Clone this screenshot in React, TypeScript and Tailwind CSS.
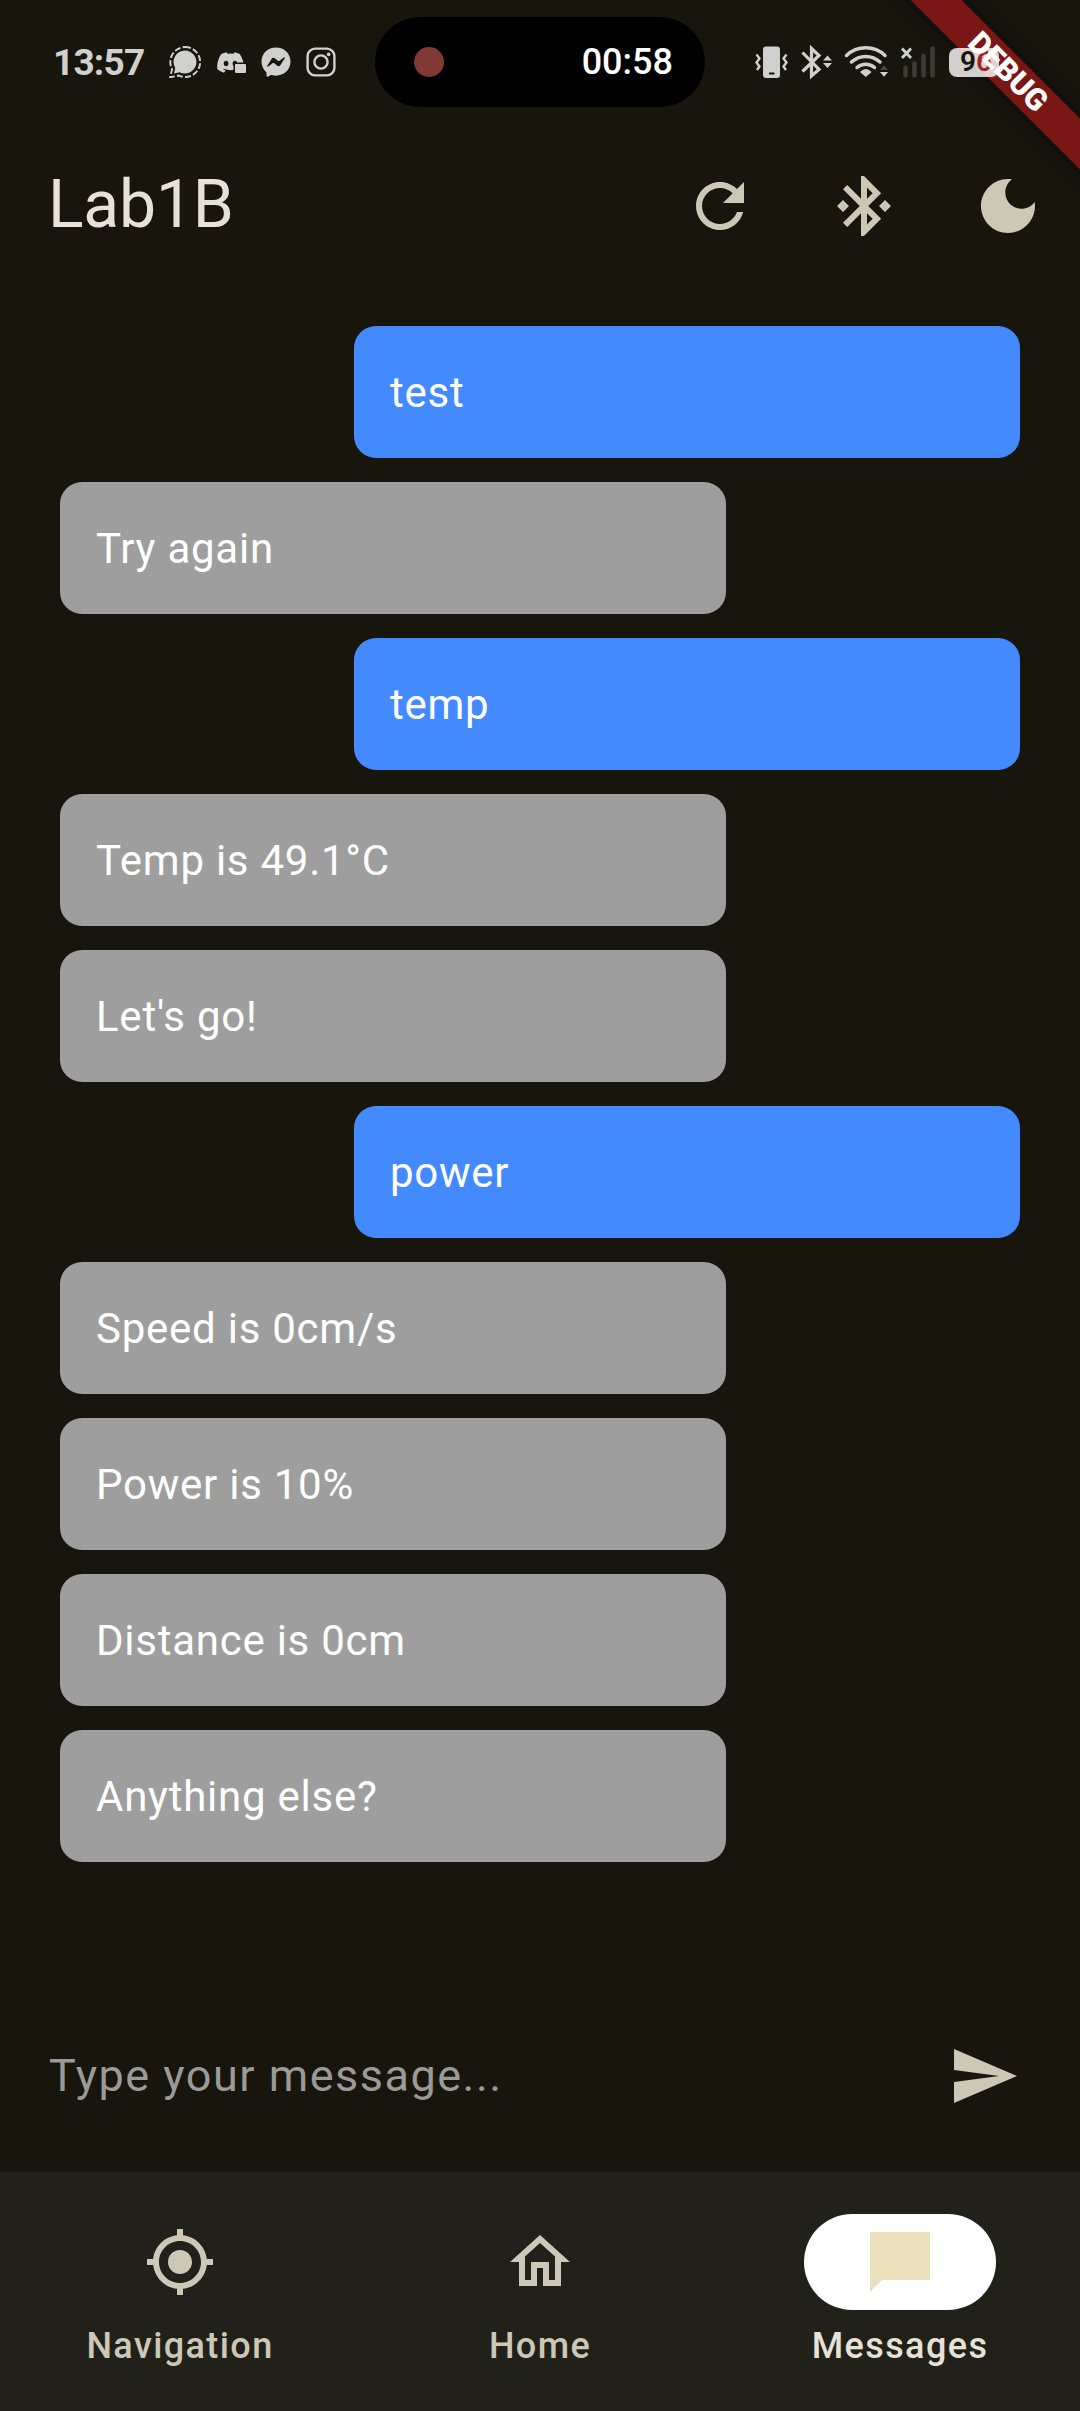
import React from "react";
import { FaDiscord, FaFacebookMessenger } from "react-icons/fa";

type Message = { text: string; mine?: boolean };

const messages: Message[] = [
  { text: "test", mine: true },
  { text: "Try again" },
  { text: "temp", mine: true },
  { text: "Temp is 49.1°C" },
  { text: "Let's go!" },
  { text: "power", mine: true },
  { text: "Speed is 0cm/s" },
  { text: "Power is 10%" },
  { text: "Distance is 0cm" },
  { text: "Anything else?" },
];

const icons = {
  refresh:
    "M17.65 6.35C16.2 4.9 14.21 4 12 4c-4.42 0-7.99 3.58-7.99 8s3.57 8 7.99 8c3.73 0 6.84-2.55 7.73-6h-2.08c-.82 2.33-3.04 4-5.65 4-3.31 0-6-2.69-6-6s2.69-6 6-6c1.66 0 3.14.69 4.22 1.78L13 11h7V4l-2.35 2.35z",
  bluetooth:
    "M7 12l-2-2-2 2 2 2 2-2zm10.71-4.29L12 2h-1v7.59L6.41 5 5 6.41 10.59 12 5 17.59 6.41 19 11 14.41V22h1l5.71-5.71-4.3-4.29 4.3-4.29zM13 5.83l1.88 1.88L13 9.59V5.83zm1.88 10.46L13 18.17v-3.76l1.88 1.88zM19 10l-2 2 2 2 2-2-2-2z",
  moon: "M12 3c-4.97 0-9 4.03-9 9s4.03 9 9 9 9-4.03 9-9c0-.46-.04-.92-.1-1.36-.98 1.37-2.58 2.26-4.4 2.26-2.98 0-5.4-2.42-5.4-5.4 0-1.81.89-3.42 2.26-4.4-.44-.06-.9-.1-1.36-.1z",
  send: "M2.01 21L23 12 2.01 3 2 10l15 2-15 2z",
  location:
    "M12 8c-2.21 0-4 1.79-4 4s1.79 4 4 4 4-1.79 4-4-1.79-4-4-4zm8.94 3c-.46-4.17-3.77-7.48-7.94-7.94V1h-2v2.06C6.83 3.52 3.52 6.83 3.06 11H1v2h2.06c.46 4.17 3.77 7.48 7.94 7.94V23h2v-2.06c4.17-.46 7.48-3.77 7.94-7.94H23v-2h-2.06zM12 19c-3.87 0-7-3.13-7-7s3.13-7 7-7 7 3.13 7 7-3.13 7-7 7z",
  home: "M12 5.69l5 4.5V18h-2v-6H9v6H7v-7.81l5-4.5M12 3L2 12h3v8h6v-6h2v6h6v-8h3L12 3z",
  chat: "M22 2H2v20l4-4h16V2z",
};

function Icon({ name, className = "" }: { name: keyof typeof icons; className?: string }) {
  return (
    <svg viewBox="0 0 24 24" className={`size-[72px] shrink-0 fill-current ${className}`}>
      <path d={icons[name]} />
    </svg>
  );
}

function SignalIcon() {
  return (
    <svg viewBox="0 0 32 32" className="size-8">
      <path d="M16 4.5a11.5 11.5 0 1 1-5.4 21.7L5 27.5l1.2-5.6A11.5 11.5 0 0 1 16 4.5z" fill="currentColor" />
      <path
        d="M16 1a15 15 0 1 1-6.2 28.6L1.2 31.3l1.9-8.2A15 15 0 0 1 16 1z"
        fill="none"
        stroke="currentColor"
        strokeWidth="1.9"
        strokeDasharray="6 2.2"
      />
    </svg>
  );
}

function DiscordIcon() {
  return (
    <div className="relative h-7 w-[30px]">
      <FaDiscord className="size-[29px]" />
      <span className="absolute right-0 bottom-[3px] h-[9px] w-[11px] rounded-[1px] bg-[#d0d0ce] ring-[1.5px] ring-[#18150d]" />
    </div>
  );
}

function InstagramIcon() {
  return (
    <svg viewBox="0 0 30 30" className="size-[30px]" fill="none" stroke="currentColor" strokeWidth="2.4">
      <rect x="1.6" y="1.6" width="26.8" height="26.8" rx="7.5" />
      <circle cx="15" cy="15" r="6.6" />
      <circle cx="22.6" cy="7.4" r="1.8" fill="currentColor" stroke="none" />
    </svg>
  );
}

function SystemIcons() {
  return (
    <svg viewBox="755 44 182 36" className="h-9 w-[182px]" fill="none" stroke="#d0d0ce">
      <rect x="763" y="46.5" width="17" height="31.5" rx="3" fill="#d0d0ce" stroke="none" />
      <path d="M769 73.5h5.5" stroke="#18150d" strokeWidth="2" />
      <path d="M756.5 54.500l3 4-3 4 3 4-2.500 3.500M786.500 54.500l-3 4 3 4-3 4 2.500 3.500" strokeWidth="2.400" />
      <path d="M802.500 52.500L819 69.500 811.500 76V48.500L819 55.500 802.500 71.500" strokeWidth="3.200" />
      <path d="M823 60.500l4.500-5 4.500 5zM823 63l4.500 5 4.500-5z" fill="#d0d0ce" stroke="none" />
      <path
        d="M846.500 55.500a28 28 0 0 1 38.500 0M851.500 62a21 21 0 0 1 28.500 0M857 67.500a13.500 13.500 0 0 1 17.500 0"
        strokeWidth="3.500"
        strokeLinecap="round"
      />
      <path d="M860 72q5.800-6 11.600 0l-5.800 5z" fill="#d0d0ce" stroke="none" />
      <path d="M880 70l4-4.500 4 4.500z" fill="#4a4842" stroke="none" />
      <path d="M880 72l4 4.800 4-4.800z" fill="#d0d0ce" stroke="none" />
      <path d="M902 48.500l9 9.500M911 48.500l-9 9.500" strokeWidth="2.800" />
      <path d="M905.500 67.500v8M914.500 63.500v12M923.500 56v19.500M932.500 48.500v27" stroke="#3d3b34" strokeWidth="4.500" strokeLinecap="round" />
    </svg>
  );
}

function StatusBar() {
  return (
    <div className="relative flex h-[124px] shrink-0 items-center pl-[53px] text-[#d0d0ce]">
      <div className="w-[116px] text-[37px] leading-none font-bold tracking-[-0.8px] whitespace-nowrap">13:57</div>
      <div className="flex w-[206px] items-center gap-[15px]">
        <SignalIcon />
        <DiscordIcon />
        <FaFacebookMessenger className="size-[30px]" />
        <InstagramIcon />
      </div>
      <div className="flex h-[90px] w-[330px] items-center justify-between rounded-full bg-black pr-[32px] pl-[39px]">
        <span className="size-[30px] rounded-full bg-[#823833]" />
        <span className="text-[36px] leading-none font-medium text-white">00:58</span>
      </div>
      <div className="ml-[50px]">
        <SystemIcons />
      </div>
      <div className="relative z-20 ml-[12px] flex h-[29px] w-[50px] items-center rounded-[8px] bg-white/80 pl-[11px] text-[28px] leading-none font-semibold">
        <span className="text-[#18150d]">9</span>
        <span className="text-[#a02323]">6</span>
      </div>
    </div>
  );
}

/* The ribbon sits under the battery badge while its caption stays above it. */
function DebugBanner() {
  return (
    <>
      <div className="pointer-events-none absolute inset-0 z-10 overflow-hidden">
        <div className="absolute top-[54px] left-[858px] h-9 w-[300px] rotate-45 bg-[#7a1716] shadow-[0_0_18px_rgba(0,0,0,0.5)]" />
      </div>
      <div className="pointer-events-none absolute inset-0 z-30 overflow-hidden">
        <div className="absolute top-[54px] left-[858px] flex h-9 w-[300px] rotate-45 items-center justify-center text-[30.6px] leading-none font-black text-white">
          DEBUG
        </div>
      </div>
    </>
  );
}

function NavItem({ icon, label, active }: { icon: keyof typeof icons; label: string; active?: boolean }) {
  return (
    <button className={`flex flex-1 flex-col items-center pt-[42px] ${active ? "text-[#e7e2d6]" : "text-[#cdc7b6]"}`}>
      <span className={`flex h-24 w-48 items-center justify-center rounded-full ${active ? "bg-white" : ""}`}>
        <Icon name={icon} className={active ? "text-[#eae2bd]" : ""} />
      </span>
      <span className="mt-3 text-[36px] leading-[48px] font-medium tracking-[1.4px]">{label}</span>
    </button>
  );
}

export default function App() {
  return (
    <div className="relative flex h-[2411px] w-[1080px] flex-col overflow-hidden bg-[#18150d] font-['Roboto',sans-serif]">
      <StatusBar />
      <DebugBanner />
      <header className="flex h-[164px] shrink-0 items-center justify-between pr-9 pl-12">
        <h1 className="pb-[2px] text-[66px] leading-none tracking-[-0.2px] text-[#e7e2d6]">Lab1B</h1>
        <div className="flex gap-[72px] text-[#cdc7b6]">
          <Icon name="refresh" />
          <Icon name="bluetooth" />
          <Icon name="moon" />
        </div>
      </header>
      <main className="flex flex-1 flex-col gap-6 px-[60px] pt-[38px]">
        {messages.map((m) => (
          <div
            key={m.text}
            className={`flex h-[132px] w-[666px] items-center rounded-[22px] px-9 pt-[2px] text-[42px] leading-[60px] tracking-[0.75px] text-white ${
              m.mine ? "self-end bg-[#448aff]" : "bg-[#9e9e9e]"
            }`}
          >
            {m.text}
          </div>
        ))}
      </main>
      <div className="flex h-48 shrink-0 items-center justify-between pr-[60px] pl-12">
        <span className="pl-px text-[45px] leading-[72px] tracking-[1.5px] text-[#9b9a97]">Type your message...</span>
        <button className="text-[#cdc7b6]">
          <Icon name="send" />
        </button>
      </div>
      <nav className="flex h-[239px] shrink-0 bg-[#222119]">
        <NavItem icon="location" label="Navigation" />
        <NavItem icon="home" label="Home" />
        <NavItem icon="chat" label="Messages" active />
      </nav>
    </div>
  );
}
